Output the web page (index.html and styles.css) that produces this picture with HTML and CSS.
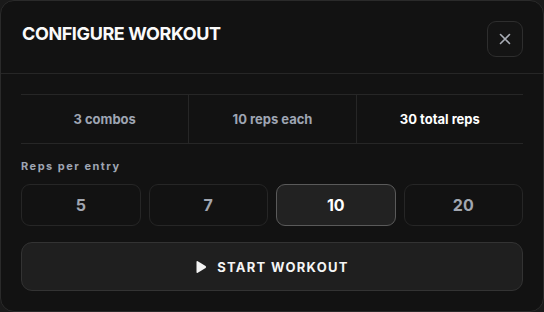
FILE: index.html
```html
<!DOCTYPE html>
<html lang="en">
<head>
  <meta charset="UTF-8">
  <title>Configure workout</title>
  <link rel="stylesheet" href="styles.css">
</head>
<body>

<div class="modal">
  <div class="header">
    <h2 class="title">CONFIGURE WORKOUT</h2>
    <button class="close" aria-label="Close">
      <svg width="14" height="14" viewBox="0 0 14 14"><path d="M2.5 2.5 L11.5 11.5 M11.5 2.5 L2.5 11.5" stroke="#a9adb6" stroke-width="1.6" stroke-linecap="round"/></svg>
    </button>
  </div>
  <div class="body">
    <div class="stats">
      <div>3 combos</div>
      <div>10 reps each</div>
      <div class="total">30 total reps</div>
    </div>
    <div class="label">Reps per entry</div>
    <div class="options">
      <button class="opt">5</button>
      <button class="opt">7</button>
      <button class="opt active">10</button>
      <button class="opt">20</button>
    </div>
    <button class="start">
      <svg width="12" height="14" viewBox="0 0 12 14"><path d="M1.5 2 Q1.5 0.6 2.8 1.3 L10.6 6 Q11.6 7 10.6 8 L2.8 12.7 Q1.5 13.4 1.5 12 Z" fill="#f2f2f2"/></svg>
      <span>START WORKOUT</span>
    </button>
  </div>
</div>

</body>
</html>
```
FILE: styles.css
```css
body {
  margin: 0;
  background-color: #1a1a1a;
  font-family: Inter, 'Liberation Sans', sans-serif;
  color: #fff;
}
.modal {
  width: 544px;
  height: 312px;
  box-sizing: border-box;
  background: #121212;
  border: 1px solid #2a2a2a;
  border-radius: 14px;
  overflow: hidden;
}
.header {
  display: flex;
  justify-content: space-between;
  align-items: flex-start;
  padding: 20px 20px 16px 20px;
  border-bottom: 1px solid #262626;
}
.title {
  margin: 2px 0 0 1px;
  font-size: 18px;
  line-height: 22px;
  font-weight: 700;
  letter-spacing: -0.4px;
  color: #fafafa;
}
.close {
  width: 36px;
  height: 36px;
  border: 1px solid #2e2e2e;
  border-radius: 9px;
  background: #141414;
  display: flex;
  align-items: center;
  justify-content: center;
  padding: 0;
  cursor: pointer;
}
.body {
  padding: 20px;
}
.stats {
  display: grid;
  grid-template-columns: repeat(3, 1fr);
  border-top: 1px solid #262626;
  border-bottom: 1px solid #262626;
  margin-bottom: 14px;
}
.stats div {
  height: 48px;
  line-height: 48px;
  text-align: center;
  font-size: 13px;
  font-weight: 700;
  color: #9ea5b3;
}
.stats div + div {
  border-left: 1px solid #262626;
}
.stats .total {
  color: #fff;
}
.label {
  font-size: 11px;
  line-height: 16px;
  font-weight: 700;
  letter-spacing: 1.5px;
  color: #9ea5b3;
  margin-bottom: 10px;
}
.options {
  display: grid;
  grid-template-columns: repeat(4, 1fr);
  gap: 8px;
  margin-bottom: 16px;
}
.opt {
  height: 42px;
  border: 1px solid #262626;
  border-radius: 9px;
  background: #121212;
  color: #a1a6b0;
  font-family: inherit;
  font-size: 16px;
  font-weight: 700;
  cursor: pointer;
}
.opt.active {
  background: #222;
  border-color: #5a5a5a;
  color: #fff;
}
.start {
  width: 100%;
  height: 49px;
  display: flex;
  align-items: center;
  justify-content: center;
  gap: 10px;
  background: #1f1f1f;
  border: 1px solid #333;
  border-radius: 11px;
  color: #f5f5f5;
  font-family: inherit;
  font-size: 13px;
  font-weight: 700;
  letter-spacing: 1.3px;
  cursor: pointer;
}
```
